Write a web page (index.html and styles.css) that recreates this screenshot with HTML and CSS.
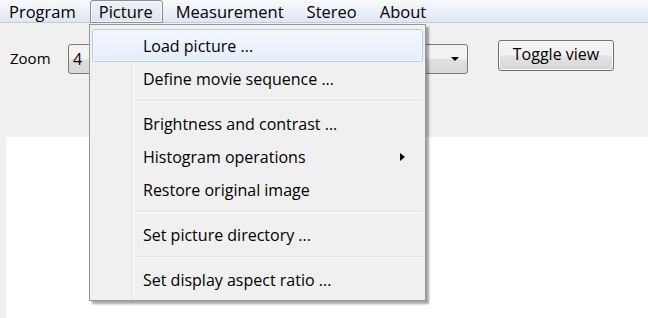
FILE: index.html
```html
<!DOCTYPE html>
<html lang="en">
<head>
  <meta charset="UTF-8" />
  <title>Picture menu</title>
  <link rel="stylesheet" href="styles.css">
</head>
<body>
  <div class="window">
    <nav class="menubar">
      <span class="menu-title">Program</span>
      <span class="menu-title open">Picture</span>
      <span class="menu-title">Measurement</span>
      <span class="menu-title">Stereo</span>
      <span class="menu-title">About</span>
    </nav>

    <div class="toolbar">
      <label class="zoom-label" for="zoom">Zoom</label>
      <div class="combo" id="zoom">
        <span class="combo-value">4</span>
        <span class="combo-arrow"></span>
      </div>
      <button type="button" class="toggle-btn">Toggle view</button>
    </div>

    <div class="canvas"></div>

    <div class="popup">
      <div class="popup-inner">
        <div class="item active">Load picture ...</div>
        <div class="item">Define movie sequence ...</div>
        <div class="sep"></div>
        <div class="item">Brightness and contrast ...</div>
        <div class="item has-sub">Histogram operations <span class="sub-arrow"></span></div>
        <div class="item">Restore original image</div>
        <div class="sep"></div>
        <div class="item">Set picture directory ...</div>
        <div class="sep"></div>
        <div class="item">Set display aspect ratio ...</div>
      </div>
    </div>
  </div>
</body>
</html>
```

FILE: styles.css
```css
body {
  margin: 0;
  padding: 0;
  font-family: "Open Sans", "Noto Sans", sans-serif;
  font-size: 16px;
  color: #000;
  background: #f0f0f0;
}

.window {
  position: relative;
  width: 648px;
  height: 318px;
  overflow: hidden;
  display: flex;
  flex-direction: column;
}

.menubar {
  display: flex;
  height: 22px;
  padding-left: 0;
  background: linear-gradient(#f8fafd, #dfe6f3);
  border-bottom: 1px solid #c5cbd9;
  font-size: 16.5px;
}

.menu-title {
  padding: 0 9px 0 8px;
  margin-right: 4px;
  line-height: 22px;
  border: 1px solid transparent;
  border-bottom: none;
}

.menu-title.open {
  border: 1px solid #8b8d91;
  border-radius: 3px 3px 0 0;
  background: linear-gradient(#eef1f7, #dde3ee);
  box-shadow: inset 0 0 0 1px #f6f8fb;
  height: 23px;
  box-sizing: border-box;
  line-height: 21px;
}

.toolbar {
  display: flex;
  align-items: flex-start;
  height: 114px;
  padding-left: 10px;
}

.zoom-label {
  font-size: 15px;
  width: 58px;
  margin-top: 25px;
}

.combo {
  display: flex;
  align-items: center;
  justify-content: space-between;
  width: 400px;
  height: 30px;
  box-sizing: border-box;
  border: 1px solid #7a7a7a;
  border-radius: 3px;
  background: linear-gradient(#f3f3f3 45%, #e0e0e0 55%, #d8d8d8);
  padding: 0 8px 0 4px;
  margin-top: 21px;
}

.combo-arrow {
  width: 0;
  height: 0;
  border-left: 4px solid transparent;
  border-right: 4px solid transparent;
  border-top: 4px solid #000;
}

.toggle-btn {
  margin-left: 30px;
  margin-top: 17px;
  width: 116px;
  height: 31px;
  border: 1px solid #707070;
  border-radius: 3px;
  background: linear-gradient(#f2f2f2 45%, #e2e2e2 55%, #d6d6d6);
  box-shadow: inset 0 0 0 1px #fbfbfb;
  font-family: inherit;
  font-size: 16px;
  color: #000;
  padding: 0 0 3px;
}

.canvas {
  flex: 1;
  margin-left: 6px;
  background: #fff;
}

.popup {
  position: absolute;
  left: 89px;
  top: 24px;
  width: 337px;
  height: 277px;
  box-sizing: border-box;
  border: 1px solid #979797;
  background: #f0f0f0;
  box-shadow: 3px 3px 2px rgba(0, 0, 0, 0.35);
}

.popup-inner {
  position: relative;
  height: 100%;
  padding: 4px 2px;
  box-sizing: border-box;
  background: linear-gradient(to right, transparent 42px, #e2e3e3 42px, #e2e3e3 43px, #ffffff 43px, #ffffff 44px, transparent 44px);
}

.item {
  position: relative;
  height: 33px;
  line-height: 33px;
  padding-left: 50px;
  box-sizing: border-box;
  border: 1px solid transparent;
  border-radius: 3px;
}

.item.active {
  border-color: #aeccf1;
  background: linear-gradient(#f2f7fd, #e6eefb);
  box-shadow: inset 0 0 0 1px #f8fbfe;
}

.sep {
  height: 12px;
  margin-left: 42px;
  background: linear-gradient(transparent 5px, #e0e0e0 5px, #e0e0e0 6px, #ffffff 6px, #ffffff 7px, transparent 7px);
}

.sub-arrow {
  position: absolute;
  right: 17px;
  top: 12px;
  width: 0;
  height: 0;
  border-top: 4px solid transparent;
  border-bottom: 4px solid transparent;
  border-left: 5px solid #000;
}
```
